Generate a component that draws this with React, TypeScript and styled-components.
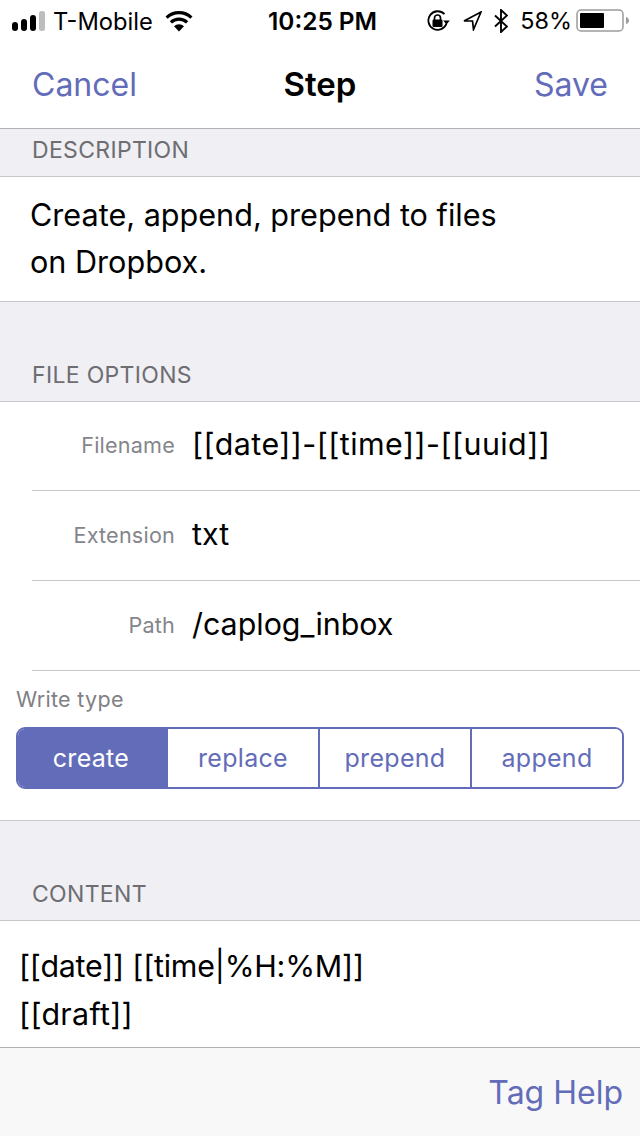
import React from "react";
import styled, { createGlobalStyle } from "styled-components";

const Global = createGlobalStyle`
  html, body { margin: 0; padding: 0; background: #fff; }
  * { box-sizing: border-box; }
  body { font-family: Inter, "Liberation Sans", sans-serif; }
`;

const accent = "#636cb9";

const Page = styled.div`
  width: 640px;
  height: 1136px;
  display: flex;
  flex-direction: column;
  overflow: hidden;
  background: #fff;
  color: #000;
`;

const StatusBar = styled.div`
  height: 40px;
  display: grid;
  grid-template-columns: 256px auto 1fr;
  align-items: center;
  padding: 1px 10px 0 12px;
`;

const StatusSide = styled.div<{ $end?: boolean }>`
  display: flex;
  align-items: center;
  justify-content: ${(p) => (p.$end ? "flex-end" : "flex-start")};
`;

const Carrier = styled.span`
  margin: 0 12px 0 7px;
  padding-top: 1px;
  font-size: 23.7px;
`;

const Clock = styled.span`
  font-weight: 600;
  font-size: 24.4px;
`;

const Percent = styled.span`
  margin: 0 4px 0 12px;
  font-size: 23.4px;
`;

const NavBar = styled.div`
  height: 89px;
  display: grid;
  grid-template-columns: 1fr auto 1fr;
  align-items: center;
  padding: 0 32px;
  border-bottom: 1px solid #b2b2b6;
`;

const NavAction = styled.span<{ $end?: boolean }>`
  font-size: 32px;
  color: ${accent};
  text-align: ${(p) => (p.$end ? "right" : "left")};
`;

const NavTitle = styled.span`
  font-size: 33px;
  font-weight: 600;
`;

const SectionHead = styled.div<{ $height: number }>`
  height: ${(p) => p.$height}px;
  background: #efeff4;
  border-bottom: 1px solid #c8c7cc;
  display: flex;
  align-items: flex-end;
  padding: 0 32px 12px;
  font-size: 23px;
  letter-spacing: 0.32px;
  color: #6d6d72;
`;

const Description = styled.div`
  height: 125px;
  padding: 14px 30px 0;
  font-size: 30.6px;
  line-height: 47px;
  border-bottom: 1px solid #c8c7cc;
`;

const Fields = styled.div`
  display: flex;
  flex-direction: column;
  padding-left: 32px;
`;

const FieldRow = styled.div`
  height: 90px;
  display: flex;
  align-items: center;
  gap: 17px;
  border-bottom: 1px solid #c8c7cc;
  &:first-child { height: 89px; }
`;

const FieldLabel = styled.span`
  width: 143px;
  text-align: right;
  font-size: 21.6px;
  letter-spacing: 0.2px;
  color: #85858a;
  padding-bottom: 2px;
`;

const FieldValue = styled.span<{ $spacing: number }>`
  font-size: 30.4px;
  letter-spacing: ${(p) => p.$spacing}px;
  padding-bottom: 4px;
`;

const WriteSection = styled.div`
  height: 150px;
  padding: 15px 16px 0;
  border-bottom: 1px solid #c8c7cc;
`;

const WriteLabel = styled.div`
  font-size: 21.5px;
  line-height: 26px;
  letter-spacing: 0.3px;
  color: #808085;
`;

const Segments = styled.div`
  margin-top: 15px;
  height: 62px;
  display: grid;
  grid-template-columns: 150px 152px 152px 1fr;
  border: 2px solid ${accent};
  border-radius: 9px;
  overflow: hidden;
`;

const Segment = styled.div<{ $active?: boolean }>`
  display: flex;
  align-items: center;
  justify-content: center;
  font-size: 25px;
  letter-spacing: 0.3px;
  background: ${(p) => (p.$active ? accent : "#fff")};
  color: ${(p) => (p.$active ? "#fff" : accent)};
  &:nth-child(1) { padding-right: 4px; }
  &:nth-child(2), &:nth-child(3) { border-right: 2px solid ${accent}; }
`;

const Content = styled.div`
  flex: 1;
  padding: 21px 19px 0;
`;

const ContentLine = styled.div<{ $spacing: number }>`
  font-size: 30.4px;
  line-height: 48px;
  letter-spacing: ${(p) => p.$spacing}px;
`;

const Toolbar = styled.div`
  height: 89px;
  background: #f8f8f8;
  border-top: 1px solid #b2b2b6;
  display: flex;
  align-items: center;
  justify-content: flex-end;
  padding: 0 17px 0 0;
`;

const IconSlot = styled.svg<{ $gap?: number }>`
  display: block;
  flex: none;
  margin-right: ${(p) => p.$gap ?? 0}px;
`;

const Signal = () => (
  <IconSlot width="34" height="20" viewBox="0 0 34 20">
    <rect x="0" y="11" width="6" height="9" rx="3" fill="#000" />
    <rect x="9" y="8" width="6" height="12" rx="3" fill="#000" />
    <rect x="18" y="4" width="6" height="16" rx="3" fill="#000" />
    <rect x="27" y="0" width="6" height="20" rx="2.500" fill="#bdbdbd" />
  </IconSlot>
);

const Wifi = () => (
  <IconSlot width="28" height="22" viewBox="0 0 28 22">
    <path d="M14 21.500L9 16.300a7.200 7.200 0 0 1 10 0z" fill="#000" />
    <path d="M5.900 12.400a11.700 11.700 0 0 1 16.200 0" fill="none" stroke="#000" strokeWidth="3.200" />
    <path d="M1.600 7.600a18 18 0 0 1 24.800 0" fill="none" stroke="#000" strokeWidth="3.200" />
  </IconSlot>
);

const RotationLock = () => (
  <IconSlot $gap={13} width="23" height="22" viewBox="0 0 23 22">
    <path d="M19.500 13.500A9.300 9.300 0 1 1 17.500 4.200" fill="none" stroke="#000" strokeWidth="1.800" />
    <path d="M16.200 10.500h6.600l-3.300 4z" fill="#000" />
    <rect x="5.500" y="9.500" width="10" height="7.500" rx="1.200" fill="#000" />
    <path d="M7.500 10V8a3 3 0 0 1 6 0v2" fill="none" stroke="#000" strokeWidth="1.700" />
  </IconSlot>
);

const Location = () => (
  <IconSlot $gap={12} width="19" height="20" viewBox="0 0 19 20">
    <path d="M18 1L1 10h8.500l1 8.500z" fill="none" stroke="#000" strokeWidth="1.700" strokeLinejoin="miter" />
  </IconSlot>
);

const Bluetooth = () => (
  <IconSlot width="14" height="24" viewBox="0 0 14 24">
    <path d="M1 6.500l12 11-6 5.500V1l6 5.500L1 17.500" fill="none" stroke="#000" strokeWidth="1.900" />
  </IconSlot>
);

const Battery = () => (
  <IconSlot width="54" height="24" viewBox="0 0 54 24">
    <rect x="1" y="1" width="46" height="21" rx="4" fill="none" stroke="#9c9c9c" strokeWidth="1.500" />
    <rect x="4" y="4" width="24" height="15" rx="1" fill="#000" />
    <path d="M50 8c2 .5 3 2 3 3.500s-1 3-3 3.500z" fill="#9c9c9c" />
  </IconSlot>
);

export default function App() {
  const rows: [string, string, number][] = [
    ["Filename", "[[date]]-[[time]]-[[uuid]]", 0.45],
    ["Extension", "txt", 0],
    ["Path", "/caplog_inbox", 0],
  ];
  const segments = ["create", "replace", "prepend", "append"];
  return (
    <Page>
      <Global />
      <StatusBar>
        <StatusSide>
          <Signal />
          <Carrier>T-Mobile</Carrier>
          <Wifi />
        </StatusSide>
        <Clock>10:25 PM</Clock>
        <StatusSide $end>
          <RotationLock />
          <Location />
          <Bluetooth />
          <Percent>58%</Percent>
          <Battery />
        </StatusSide>
      </StatusBar>
      <NavBar>
        <NavAction>Cancel</NavAction>
        <NavTitle>Step</NavTitle>
        <NavAction $end>Save</NavAction>
      </NavBar>
      <SectionHead $height={48}>DESCRIPTION</SectionHead>
      <Description>
        Create, append, prepend to files
        <br />
        on Dropbox.
      </Description>
      <SectionHead $height={100}>FILE OPTIONS</SectionHead>
      <Fields>
        {rows.map(([label, value, spacing]) => (
          <FieldRow key={label}>
            <FieldLabel>{label}</FieldLabel>
            <FieldValue $spacing={spacing}>{value}</FieldValue>
          </FieldRow>
        ))}
      </Fields>
      <WriteSection>
        <WriteLabel>Write type</WriteLabel>
        <Segments>
          {segments.map((s, i) => (
            <Segment key={s} $active={i === 0}>
              {s}
            </Segment>
          ))}
        </Segments>
      </WriteSection>
      <SectionHead $height={100}>CONTENT</SectionHead>
      <Content>
        <ContentLine $spacing={-0.22}>[[date]] [[time|%H:%M]]</ContentLine>
        <ContentLine $spacing={0.3}>[[draft]]</ContentLine>
      </Content>
      <Toolbar>
        <NavAction>Tag Help</NavAction>
      </Toolbar>
    </Page>
  );
}
